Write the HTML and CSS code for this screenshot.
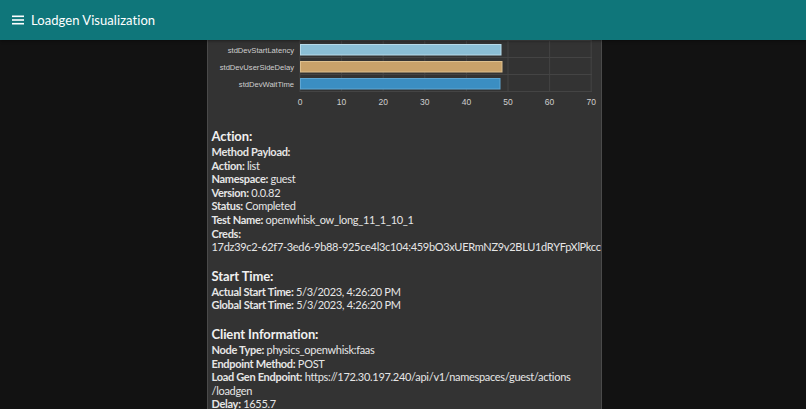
FILE: index.html
```html
<!DOCTYPE html>
<html>
<head>
<meta charset="utf-8">
<title>Loadgen Visualization</title>
<link rel="stylesheet" href="styles.css">
</head>
<body>
<header class="appbar">
  <svg class="menu-icon" width="12" height="10" viewBox="0 0 12 10">
    <rect x="0" y="0.5" width="12" height="1.6" fill="#fff"/>
    <rect x="0" y="4.2" width="12" height="1.6" fill="#fff"/>
    <rect x="0" y="7.9" width="12" height="1.6" fill="#fff"/>
  </svg>
  <span class="title">Loadgen Visualization</span>
</header>
<main class="page">
  <section class="panel">
    <svg class="chart" width="393" height="72" viewBox="0 0 393 72">
      <g stroke="#444" stroke-width="1">
        <line x1="92" y1="-10" x2="92" y2="52"/>
        <line x1="133.6" y1="-10" x2="133.6" y2="52"/>
        <line x1="175.2" y1="-10" x2="175.2" y2="52"/>
        <line x1="216.8" y1="-10" x2="216.8" y2="52"/>
        <line x1="258.4" y1="-10" x2="258.4" y2="52"/>
        <line x1="300" y1="-10" x2="300" y2="52"/>
        <line x1="341.6" y1="-10" x2="341.6" y2="52"/>
        <line x1="383.2" y1="-10" x2="383.2" y2="52"/>
        <line x1="92" y1="0.5" x2="384" y2="0.5"/>
        <line x1="92" y1="17.5" x2="384" y2="17.5"/>
        <line x1="92" y1="34.5" x2="384" y2="34.5"/>
        <line x1="92" y1="51.5" x2="384" y2="51.5"/>
      </g>
      <rect x="92.5" y="4.5" width="200.5" height="10.5" fill="#8bbfd6" stroke="#b7dbea"/>
      <rect x="92.5" y="21.5" width="201.5" height="10.5" fill="#c9a26a" stroke="#ddc08f"/>
      <rect x="92.5" y="38.5" width="199.5" height="10.5" fill="#3b8ec2" stroke="#5fa6d2"/>
      <g class="ylabels" text-anchor="end">
        <text x="86" y="12.5">stdDevStartLatency</text>
        <text x="86" y="29.5">stdDevUserSideDelay</text>
        <text x="86" y="46.5">stdDevWaitTime</text>
      </g>
      <g class="xlabels" text-anchor="middle">
        <text x="92" y="65">0</text>
        <text x="133.6" y="65">10</text>
        <text x="175.2" y="65">20</text>
        <text x="216.8" y="65">30</text>
        <text x="258.4" y="65">40</text>
        <text x="300" y="65">50</text>
        <text x="341.6" y="65">60</text>
        <text x="383.2" y="65">70</text>
      </g>
    </svg>

    <div class="info">
      <h3 class="heading">Action:</h3>
      <div class="row"><b>Method Payload:</b></div>
      <div class="row"><b>Action:</b> list</div>
      <div class="row"><b>Namespace:</b> guest</div>
      <div class="row"><b>Version:</b> 0.0.82</div>
      <div class="row"><b>Status:</b> Completed</div>
      <div class="row"><b>Test Name:</b> openwhisk_ow_long_11_1_10_1</div>
      <div class="row"><b>Creds:</b> <span class="nowrap">17dz39c2-62f7-3ed6-9b88-925ce4l3c104:459bO3xUERmNZ9v2BLU1dRYFpXlPkccOFqrJ7Lx0f</span></div>
    </div>

    <div class="info">
      <h3 class="heading">Start Time:</h3>
      <div class="row"><b>Actual Start Time:</b> 5/3/2023, 4:26:20 PM</div>
      <div class="row"><b>Global Start Time:</b> 5/3/2023, 4:26:20 PM</div>
    </div>

    <div class="info">
      <h3 class="heading">Client Information:</h3>
      <div class="row"><b>Node Type:</b> physics_openwhisk:faas</div>
      <div class="row"><b>Endpoint Method:</b> POST</div>
      <div class="row"><b>Load Gen Endpoint:</b> <span class="nowrap">https://172.30.197.240/api/v1/namespaces/guest/actions</span><br>/loadgen</div>
      <div class="row"><b>Delay:</b> 1655.7</div>
    </div>
  </section>
</main>
</body>
</html>
```

FILE: styles.css
```css
html, body {
  margin: 0;
  padding: 0;
  background: #121212;
  font-family: "Lato", "Open Sans", sans-serif;
  height: 409px;
  overflow: hidden;
}

.appbar {
  height: 40px;
  background: #0f767a;
  display: flex;
  align-items: center;
  padding-left: 12px;
  gap: 7px;
  color: #fff;
  box-shadow: 0 1px 3px rgba(0,0,0,0.4);
  position: relative;
  z-index: 2;
}

.menu-icon {
  display: block;
}

.title {
  font-size: 13px;
  font-weight: 400;
  letter-spacing: 0.05px;
}

.page {
  display: flex;
  justify-content: center;
}

.panel {
  width: 393px;
  margin-left: 2px;
  background: #333333;
  border-left: 1px solid #4a4a4a;
  border-right: 1px solid #4a4a4a;
  overflow: hidden;
  min-height: 400px;
  display: flex;
  flex-direction: column;
}

.chart {
  display: block;
  flex: none;
  margin-bottom: 2px;
}

.chart text {
  font-family: "Liberation Sans", Arial, sans-serif;
  font-size: 8.5px;
  fill: #cfcfcf;
}

.chart .ylabels text {
  font-size: 7.6px;
}

.info {
  padding: 0 4px;
  color: #e6e6e6;
  margin-top: 14px;
}

.heading {
  margin: 0;
  font-size: 13px;
  line-height: 17px;
  font-weight: 700;
  letter-spacing: -0.1px;
  color: #f0f0f0;
}

.row {
  font-size: 11px;
  line-height: 13.6px;
  letter-spacing: -0.3px;
}

.row b {
  font-weight: 700;
}

.nowrap {
  white-space: nowrap;
}
```
